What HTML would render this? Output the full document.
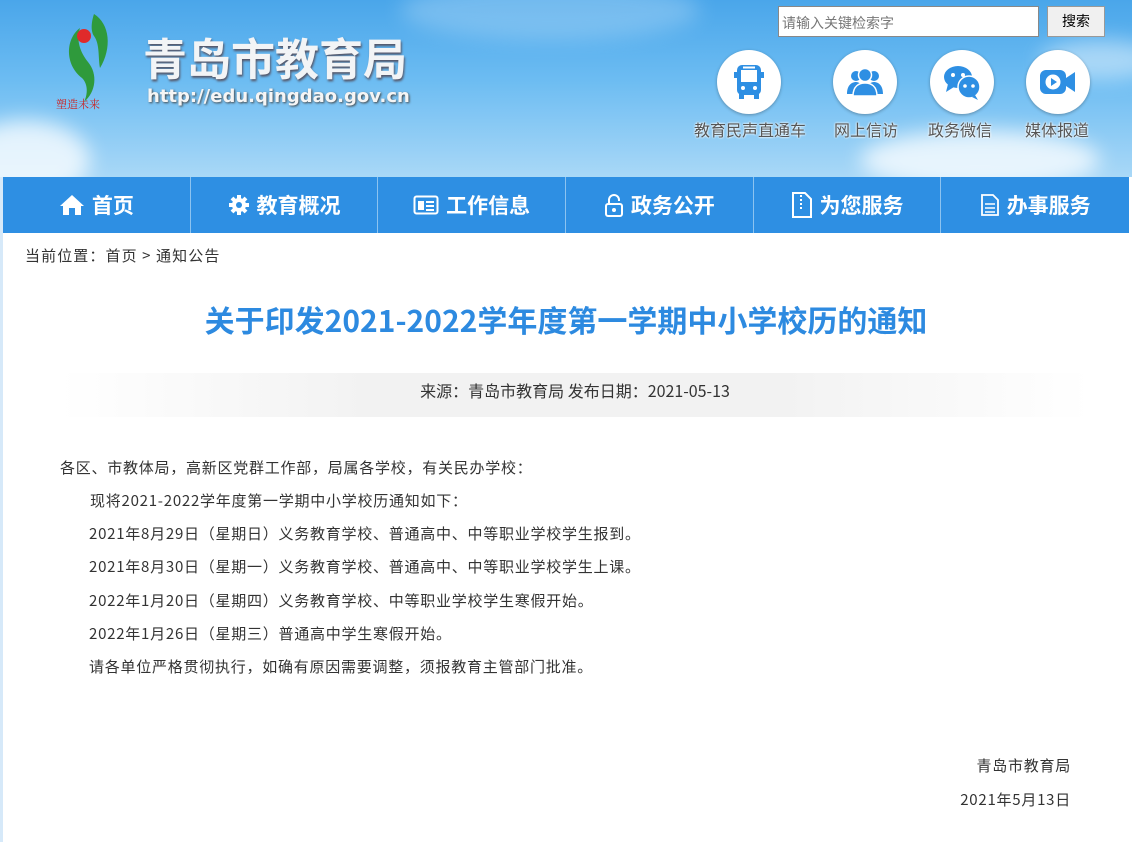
<!DOCTYPE html>
<html><head><meta charset="utf-8"><style>
*{margin:0;padding:0;box-sizing:border-box}
body{width:1132px;height:842px;overflow:hidden;background:#fff;font-family:"Liberation Sans","Noto Sans CJK SC",sans-serif;position:relative}
.hdr{position:absolute;left:0;top:0;width:1132px;height:177px;background:linear-gradient(180deg,#4aa6ea 0%,#6cbcf2 45%,#a9d8f7 100%);overflow:hidden}
.cloud{position:absolute;border-radius:50%;background:rgba(255,255,255,.75);filter:blur(10px)}
.side{position:absolute;left:0;top:177px;width:3px;height:665px;background:#d6e9f9}
.title{position:absolute;left:143px;top:24px;font-size:44px;font-weight:bold;color:#f2f4f6;letter-spacing:0px;text-shadow:1px 2px 2px #556;font-family:"Noto Sans CJK SC",sans-serif}
.url{position:absolute;left:147px;top:86px;font-size:18px;font-weight:bold;color:#f5f5f5;text-shadow:1px 1px 2px #444;font-family:"DejaVu Sans",sans-serif}
.search{position:absolute;left:778px;top:6px;width:261px;height:31px;background:#fff;border:1px solid #888;font-size:14px;color:#777;padding:6px 3px;font-family:"Noto Sans CJK SC",sans-serif}
.btn{position:absolute;left:1047px;top:6px;width:58px;height:31px;background:#f0f0f0;border:1px solid #999;font-size:14px;text-align:center;line-height:29px;font-family:"Noto Sans CJK SC",sans-serif}
.ic{position:absolute;top:50px;width:64px;height:64px;border-radius:50%;background:#fff;box-shadow:0 1px 3px rgba(0,0,0,.3)}
.ic svg{position:absolute;left:12px;top:12px}
.lab{position:absolute;top:117px;font-size:16px;color:#555;text-shadow:0 0 2px #fff,0 0 2px #fff;font-family:"Noto Sans CJK SC",sans-serif}
.nav{position:absolute;left:3px;top:177px;width:1126px;height:56px;background:#2e8fe3;display:flex}
.nav div{width:188px;height:56px;border-right:1px solid #8cc3f0;color:#fff;font-size:21px;font-weight:bold;display:flex;align-items:center;justify-content:center;gap:7px;font-family:"Noto Sans CJK SC",sans-serif}
.nav div:last-child{border-right:none}
.crumb{position:absolute;left:25px;top:245px;font-size:15px;letter-spacing:1.1px;color:#333;font-family:"Noto Sans CJK SC",sans-serif}
h1{position:absolute;left:0;width:1132px;text-align:center;top:297px;font-size:30px;color:#2d8ae0;font-weight:bold;font-family:"Noto Sans CJK SC",sans-serif}
.src{position:absolute;left:60px;top:373px;width:1030px;height:44px;background:linear-gradient(90deg,#fff 0%,#f2f2f2 30%,#f2f2f2 70%,#fff 100%);text-align:center;line-height:34px;font-size:16px;color:#333;font-family:"Noto Sans CJK SC",sans-serif}
.body p{position:absolute;font-size:15px;letter-spacing:0.75px;color:#333;font-family:"Noto Sans CJK SC",sans-serif;white-space:nowrap;line-height:20px}
</style></head><body>
<div class="hdr">
<div class="cloud" style="left:-40px;top:120px;width:130px;height:80px"></div>
<div class="cloud" style="left:860px;top:130px;width:240px;height:60px"></div>
<div class="cloud" style="left:1040px;top:40px;width:120px;height:40px;opacity:.6"></div>
<div class="cloud" style="left:400px;top:-20px;width:300px;height:60px;opacity:.3"></div>
<svg style="position:absolute;left:62px;top:14px" width="60" height="100" viewBox="0 0 60 100">
<path d="M18 14 C4 24 2 50 20 64 C26 70 26 80 22 88 C34 78 36 60 26 48 C18 38 14 26 18 14Z" fill="#2f9a3c"/>
<path d="M32 0 C48 10 50 34 38 54 C36 44 38 30 32 22 C28 16 30 6 32 0Z" fill="#2f9a3c"/>
<circle cx="22" cy="22" r="7" fill="#e02a2a"/>
</svg>
<div style="position:absolute;left:56px;top:96px;font-size:11px;color:#c22;font-family:'Noto Serif CJK SC',serif">塑造未来</div>
<div class="title">青岛市教育局</div>
<div class="url">http://edu.qingdao.gov.cn</div>
<div class="search">请输入关键检索字</div>
<div class="btn">搜索</div>
<div class="ic" style="left:717px"><svg width="40" height="40" viewBox="0 0 40 40"><rect x="8" y="3" width="24" height="30" rx="5" fill="#2e8fe3"/><rect x="12" y="8" width="16" height="12" fill="#fff"/><rect x="14" y="4.5" width="12" height="2" fill="#fff"/><circle cx="14" cy="26" r="2" fill="#fff"/><circle cx="26" cy="26" r="2" fill="#fff"/><rect x="10" y="32" width="5" height="5" fill="#2e8fe3"/><rect x="25" y="32" width="5" height="5" fill="#2e8fe3"/><rect x="5" y="10" width="3" height="6" fill="#2e8fe3"/><rect x="32" y="10" width="3" height="6" fill="#2e8fe3"/></svg></div>
<div class="ic" style="left:833px"><svg width="40" height="40" viewBox="0 0 40 40"><circle cx="11" cy="14" r="5" fill="#2e8fe3"/><circle cx="29" cy="14" r="5" fill="#2e8fe3"/><path d="M2 32 C2 22 8 20 11 20 C14 20 16 22 16 24 L16 32Z M38 32 C38 22 32 20 29 20 C26 20 24 22 24 24 L24 32Z" fill="#2e8fe3"/><circle cx="20" cy="13" r="6.5" fill="#2e8fe3" stroke="#fff" stroke-width="1.5"/><path d="M8 34 C8 24 14 21 20 21 C26 21 32 24 32 34Z" fill="#2e8fe3" stroke="#fff" stroke-width="1.5"/></svg></div>
<div class="ic" style="left:930px"><svg width="40" height="40" viewBox="0 0 40 40"><ellipse cx="16" cy="15" rx="14" ry="11" fill="#2e8fe3"/><path d="M6 22 L4 30 L12 25Z" fill="#2e8fe3"/><circle cx="11" cy="13" r="2" fill="#fff"/><circle cx="21" cy="13" r="2" fill="#fff"/><circle cx="27" cy="25" r="11" fill="#2e8fe3" stroke="#fff" stroke-width="1.5"/><path d="M33 33 L36 38 L30 35Z" fill="#2e8fe3"/><circle cx="23" cy="24" r="1.8" fill="#fff"/><circle cx="31" cy="24" r="1.8" fill="#fff"/></svg></div>
<div class="ic" style="left:1026px"><svg width="40" height="40" viewBox="0 0 40 40"><rect x="2" y="8" width="26" height="24" rx="6" fill="#2e8fe3"/><path d="M28 16 L37 10 L37 30 L28 24Z" fill="#2e8fe3"/><circle cx="15" cy="20" r="7.5" fill="#fff"/><path d="M13 16 L19 20 L13 24Z" fill="#2e8fe3"/></svg></div>
<div class="lab" style="left:694px">教育民声直通车</div>
<div class="lab" style="left:834px">网上信访</div>
<div class="lab" style="left:928px">政务微信</div>
<div class="lab" style="left:1025px">媒体报道</div>
</div>
<div class="side"></div>
<div class="nav">
<div><svg width="26" height="22" viewBox="0 0 26 22"><path d="M13 1 L1 12 L4 12 L4 21 L10 21 L10 14 L16 14 L16 21 L22 21 L22 12 L25 12Z" fill="#fff"/></svg>首页</div>
<div><svg width="22" height="22" viewBox="0 0 22 22"><circle cx="11" cy="11" r="7" fill="#fff"/><g stroke="#fff" stroke-width="4"><line x1="11" y1="1" x2="11" y2="21"/><line x1="1" y1="11" x2="21" y2="11"/><line x1="4" y1="4" x2="18" y2="18"/><line x1="18" y1="4" x2="4" y2="18"/></g><circle cx="11" cy="11" r="3" fill="#2e8fe3"/></svg>教育概况</div>
<div><svg width="26" height="22" viewBox="0 0 26 22"><rect x="1.5" y="2.5" width="23" height="17" rx="2" fill="none" stroke="#fff" stroke-width="2"/><rect x="5" y="7" width="6" height="9" fill="#fff"/><line x1="13" y1="8" x2="21" y2="8" stroke="#fff" stroke-width="2"/><line x1="13" y1="12" x2="21" y2="12" stroke="#fff" stroke-width="2"/><line x1="13" y1="16" x2="21" y2="16" stroke="#fff" stroke-width="2"/></svg>工作信息</div>
<div><svg width="20" height="24" viewBox="0 0 20 24"><path d="M5 11 V7 a5 5 0 0 1 10 0 V8" fill="none" stroke="#fff" stroke-width="2"/><rect x="2" y="11" width="16" height="12" rx="2" fill="none" stroke="#fff" stroke-width="2"/><circle cx="10" cy="17" r="2" fill="#fff"/></svg>政务公开</div>
<div><svg width="22" height="28" viewBox="0 0 22 28"><path d="M2 2 H14 L20 8 V26 H2Z" fill="none" stroke="#fff" stroke-width="2"/><line x1="10" y1="4" x2="10" y2="20" stroke="#fff" stroke-width="2" stroke-dasharray="2 2"/></svg>为您服务</div>
<div><svg width="20" height="24" viewBox="0 0 20 24"><path d="M2 2 H13 L18 7 V22 H2Z" fill="none" stroke="#fff" stroke-width="1.8"/><line x1="5" y1="11" x2="15" y2="11" stroke="#fff" stroke-width="1.5"/><line x1="5" y1="15" x2="15" y2="15" stroke="#fff" stroke-width="1.5"/><line x1="5" y1="19" x2="15" y2="19" stroke="#fff" stroke-width="1.5"/></svg>办事服务</div>
</div>
<div class="crumb">当前位置：首页 &gt; 通知公告</div>
<h1>关于印发2021-2022学年度第一学期中小学校历的通知</h1>
<div class="src">来源：青岛市教育局 发布日期：2021-05-13</div>
<div class="body">
<p style="left:60px;top:458px">各区、市教体局，高新区党群工作部，局属各学校，有关民办学校：</p>
<p style="left:90px;top:491px">现将2021-2022学年度第一学期中小学校历通知如下：</p>
<p style="left:89px;top:524px">2021年8月29日（星期日）义务教育学校、普通高中、中等职业学校学生报到。</p>
<p style="left:89px;top:557px">2021年8月30日（星期一）义务教育学校、普通高中、中等职业学校学生上课。</p>
<p style="left:89px;top:591px">2022年1月20日（星期四）义务教育学校、中等职业学校学生寒假开始。</p>
<p style="left:89px;top:624px">2022年1月26日（星期三）普通高中学生寒假开始。</p>
<p style="left:89px;top:657px">请各单位严格贯彻执行，如确有原因需要调整，须报教育主管部门批准。</p>
<p style="right:61px;top:756px">青岛市教育局</p>
<p style="right:61px;top:790px">2021年5月13日</p>
</div>
</body></html>
